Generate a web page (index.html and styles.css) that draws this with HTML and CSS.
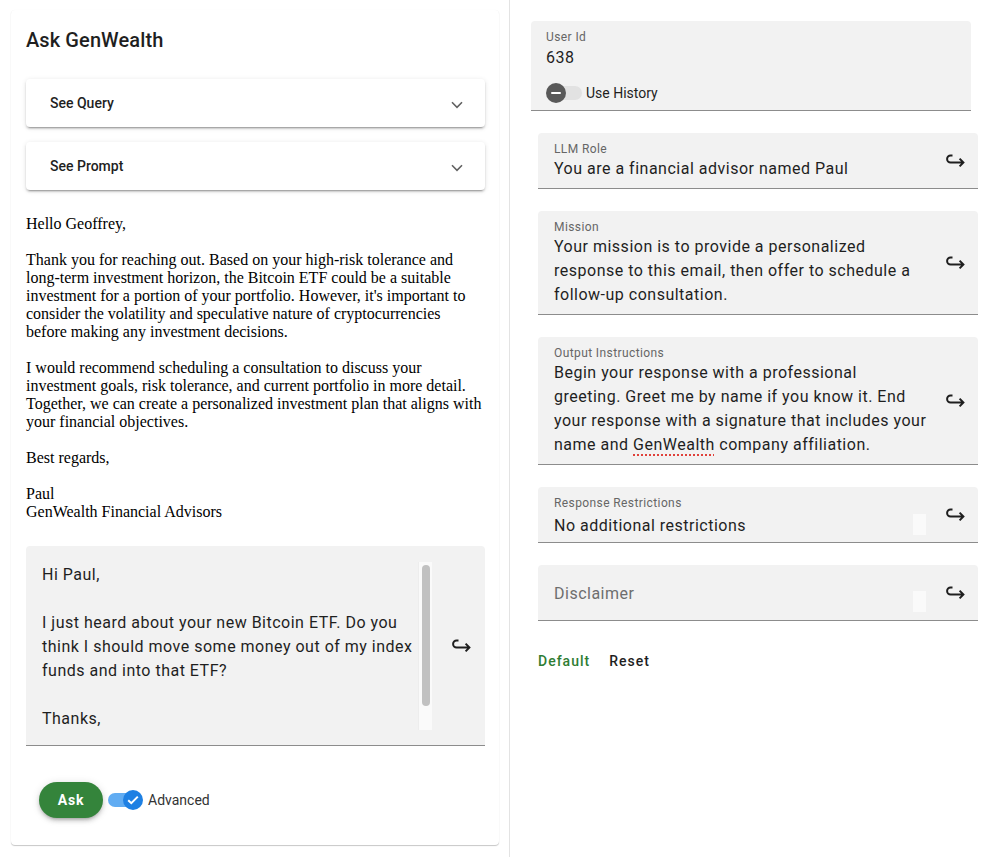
FILE: index.html
```html
<!DOCTYPE html>
<html lang="en">
<head>
<meta charset="utf-8">
<title>Ask GenWealth</title>
<link rel="stylesheet" href="styles.css">
</head>
<body>
<div class="layout">
  <section class="left-col">
    <div class="card">
      <h1 class="card-title">Ask GenWealth</h1>
      <div class="panel">
        <span class="panel-title">See Query</span>
        <svg class="chev" width="12" height="8" viewBox="0 0 12 8"><path d="M1 1.3L6 6.3L11 1.3" fill="none" stroke="#616161" stroke-width="1.6"/></svg>
      </div>
      <div class="panel panel-second">
        <span class="panel-title">See Prompt</span>
        <svg class="chev" width="12" height="8" viewBox="0 0 12 8"><path d="M1 1.3L6 6.3L11 1.3" fill="none" stroke="#616161" stroke-width="1.6"/></svg>
      </div>
      <div class="response">Hello Geoffrey,

Thank you for reaching out. Based on your high-risk tolerance and long-term investment horizon, the Bitcoin ETF could be a suitable investment for a portion of your portfolio. However, it's important to consider the volatility and speculative nature of cryptocurrencies before making any investment decisions.

I would recommend scheduling a consultation to discuss your investment goals, risk tolerance, and current portfolio in more detail. Together, we can create a personalized investment plan that aligns with your financial objectives.

Best regards,

Paul
GenWealth Financial Advisors</div>
      <div class="query-field">
        <div class="query-scroll">
          <div class="query-text">Hi Paul,

I just heard about your new Bitcoin ETF. Do you think I should move some money out of my index funds and into that ETF?

Thanks,</div>
          <div class="scrollbar"><div class="thumb"></div></div>
        </div>
        <button class="send" aria-label="Send">
          <svg width="20" height="18" viewBox="0 0 20 18"><path d="M7.5 3.5H5.6a3.5 3.5 0 0 0 0 7H18.2M14.6 6.6L18.4 10.5L14.6 14.4" fill="none" stroke="#1f1f1f" stroke-width="2"/></svg>
        </button>
      </div>
      <div class="actions">
        <button class="ask">Ask</button>
        <label class="toggle toggle-adv">
          <span class="track track-on"><span class="knob knob-on"><svg width="12" height="10" viewBox="0 0 12 10"><path d="M1.2 5.2L4.3 8.2L10.8 1.6" fill="none" stroke="#fff" stroke-width="2"/></svg></span></span>
          <span class="toggle-text">Advanced</span>
        </label>
      </div>
    </div>
  </section>

  <section class="right-col">
    <div class="user-field">
      <div class="label">User Id</div>
      <div class="value">638</div>
      <label class="toggle toggle-hist">
        <span class="track track-off"><span class="knob knob-off"><span class="minus"></span></span></span>
        <span class="toggle-text">Use History</span>
      </label>
    </div>

    <div class="prompts">
      <div class="pfield">
        <div class="pbody">
          <div class="label">LLM Role</div>
          <div class="value">You are a financial advisor named Paul</div>
        </div>
        <button class="send" aria-label="Apply"><svg width="20" height="18" viewBox="0 0 20 18"><path d="M7.5 3.5H5.6a3.5 3.5 0 0 0 0 7H18.2M14.6 6.6L18.4 10.5L14.6 14.4" fill="none" stroke="#1f1f1f" stroke-width="2"/></svg></button>
      </div>
      <div class="pfield">
        <div class="pbody">
          <div class="label">Mission</div>
          <div class="value">Your mission is to provide a personalized response to this email, then offer to schedule a follow-up consultation.</div>
        </div>
        <button class="send" aria-label="Apply"><svg width="20" height="18" viewBox="0 0 20 18"><path d="M7.5 3.5H5.6a3.5 3.5 0 0 0 0 7H18.2M14.6 6.6L18.4 10.5L14.6 14.4" fill="none" stroke="#1f1f1f" stroke-width="2"/></svg></button>
      </div>
      <div class="pfield">
        <div class="pbody">
          <div class="label">Output Instructions</div>
          <div class="value">Begin your response with a professional greeting. Greet me by name if you know it. End your response with a signature that includes your name and <span class="spell">GenWealth</span> company affiliation.</div>
        </div>
        <button class="send" aria-label="Apply"><svg width="20" height="18" viewBox="0 0 20 18"><path d="M7.5 3.5H5.6a3.5 3.5 0 0 0 0 7H18.2M14.6 6.6L18.4 10.5L14.6 14.4" fill="none" stroke="#1f1f1f" stroke-width="2"/></svg></button>
      </div>
      <div class="pfield">
        <div class="pbody pbody-rr">
          <div class="label">Response Restrictions</div>
          <div class="value value-row value-rr"><span>No additional restrictions</span><span class="strip"></span></div>
        </div>
        <button class="send" aria-label="Apply"><svg width="20" height="18" viewBox="0 0 20 18"><path d="M7.5 3.5H5.6a3.5 3.5 0 0 0 0 7H18.2M14.6 6.6L18.4 10.5L14.6 14.4" fill="none" stroke="#1f1f1f" stroke-width="2"/></svg></button>
      </div>
      <div class="pfield">
        <div class="pbody pbody-empty">
          <div class="value value-row"><span class="placeholder">Disclaimer</span><span class="strip strip-low"></span></div>
        </div>
        <button class="send" aria-label="Apply"><svg width="20" height="18" viewBox="0 0 20 18"><path d="M7.5 3.5H5.6a3.5 3.5 0 0 0 0 7H18.2M14.6 6.6L18.4 10.5L14.6 14.4" fill="none" stroke="#1f1f1f" stroke-width="2"/></svg></button>
      </div>
    </div>

    <div class="prompt-actions">
      <button class="text-btn text-btn-green">Default</button>
      <button class="text-btn">Reset</button>
    </div>
  </section>
</div>
</body>
</html>
```
FILE: styles.css
```css
* { box-sizing: border-box; }
html, body { margin: 0; padding: 0; background: #fff; }
body {
  font-family: Roboto, "Noto Sans", "Liberation Sans", sans-serif;
  color: #1f1f1f;
  width: 992px;
  height: 857px;
  overflow: hidden;
}
button { font-family: inherit; }
.layout { display: flex; height: 857px; }

/* left column */
.left-col {
  width: 510px;
  flex: none;
  border-right: 1px solid #e3e3e3;
  padding: 10px 10px 0 11px;
}
.card {
  background: #fff;
  border-radius: 4px;
  box-shadow: 0 1px 1px 0 rgba(0,0,0,.22), 0 0 1px 0 rgba(0,0,0,.05);
  padding: 18px 14px 27px 15px;
}
.card-title {
  margin: 0;
  font-size: 20px;
  line-height: 24px;
  font-weight: 500;
  letter-spacing: 0.1px;
  color: #1f1f1f;
}
.panel {
  margin-top: 27px;
  height: 48px;
  border-radius: 4px;
  background: #fff;
  box-shadow: 0 3px 1px -2px rgba(0,0,0,.2), 0 2px 2px 0 rgba(0,0,0,.14), 0 1px 5px 0 rgba(0,0,0,.12);
  display: flex;
  align-items: center;
  justify-content: space-between;
  padding: 0 22px 0 24px;
}
.panel-second { margin-top: 15px; }
.panel-title { font-size: 14px; font-weight: 500; color: #1f1f1f; }
.chev { margin-top: 4px; }

.response {
  margin-top: 25px;
  font-family: "Liberation Serif", "Times New Roman", serif;
  font-size: 16px;
  line-height: 18px;
  color: #000;
  white-space: pre-line;
}

.query-field {
  margin-top: 25px;
  background: #f2f2f2;
  border-radius: 4px 4px 0 0;
  border-bottom: 1px solid #8c8c8c;
  padding: 16px 4px 15px 16px;
  display: flex;
  align-items: center;
}
.query-scroll { display: flex; width: 390px; height: 168px; }
.query-text {
  width: 376px;
  height: 168px;
  font-size: 16px;
  line-height: 24px;
  letter-spacing: 0.5px;
  white-space: pre-line;
  color: #1f1f1f;
  padding-top: 1px;
}
.scrollbar {
  width: 14px;
  height: 168px;
  background: #fafafa;
  border-left: 1px solid #ededed;
  padding: 3px 3px 0 3px;
}
.thumb { width: 8px; height: 141px; border-radius: 4px; background: #c1c1c1; }

.send {
  width: 40px;
  height: 40px;
  margin-left: 9px;
  padding: 0;
  border: none;
  background: transparent;
  display: grid;
  place-items: center;
  flex: none;
}

.actions {
  margin-top: 36px;
  display: flex;
  align-items: center;
  padding-left: 13px;
}
.ask {
  width: 64px;
  height: 36px;
  border: none;
  border-radius: 18px;
  background: #34843b;
  color: #fff;
  font-size: 14px;
  font-weight: 700;
  letter-spacing: 0.8px;
  box-shadow: 0 3px 3px -2px rgba(0,0,0,.2), 0 3px 4px 0 rgba(0,0,0,.14), 0 1px 8px 0 rgba(0,0,0,.12);
}

.toggle { display: flex; align-items: center; font-size: 14px; }
.toggle-adv { margin-left: 5px; color: #333; }
.track { position: relative; width: 34px; height: 14px; border-radius: 7px; flex: none; }
.track-on { background: #61acf2; }
.track-off { background: #e2e2e2; }
.knob {
  position: absolute;
  top: -3px;
  width: 20px;
  height: 20px;
  border-radius: 50%;
  display: grid;
  place-items: center;
}
.knob-on { right: -1px; background: #1e80e3; }
.knob-off { left: -2px; background: #595959; }
.minus { width: 10px; height: 2px; background: #fff; border-radius: 1px; }
.toggle-adv .toggle-text { margin-left: 6px; }
.toggle-hist .toggle-text { margin-left: 4px; color: #1f1f1f; }

/* right column */
.right-col { flex: 1; padding: 21px 14px 0 21px; }
.label {
  font-size: 12px;
  line-height: 16px;
  color: #666;
  letter-spacing: 0.4px;
}
.value {
  font-size: 16px;
  line-height: 24px;
  letter-spacing: 0.5px;
  color: #1f1f1f;
}
.user-field {
  width: 440px;
  background: #f2f2f2;
  border-radius: 4px 4px 0 0;
  border-bottom: 1px solid #8c8c8c;
  padding: 8px 15px 5px 15px;
}
.user-field .value { margin-top: 1px; }
.toggle-hist { margin-top: 11px; height: 24px; padding-left: 2px; }

.prompts {
  margin: 22px 0 0 7px;
  display: flex;
  flex-direction: column;
  gap: 22px;
}
.pfield {
  width: 440px;
  display: flex;
  align-items: center;
  background: #f2f2f2;
  border-radius: 4px 4px 0 0;
  border-bottom: 1px solid #8c8c8c;
  padding: 0 3px 0 16px;
}
.pfield .send { margin-left: 8px; }
.pbody { width: 373px; padding: 8px 0 7px; }
.pbody-rr { padding: 8px 0 4px; }
.value-rr { margin-top: 3px; }
.pbody-empty { padding: 17px 0 14px; }
.value-row { display: flex; justify-content: space-between; align-items: flex-start; }
.strip { width: 13px; height: 21px; background: #fafafa; flex: none; margin-right: 1px; }
.strip-low { margin-top: 9px; margin-bottom: -6px; }
.placeholder { color: #6e6e6e; }
.spell {
  text-decoration: underline dotted #e0413a;
  text-decoration-thickness: 1.5px;
  text-underline-offset: 4px;
}

.prompt-actions {
  margin: 22px 0 0 7px;
  height: 36px;
  display: flex;
  align-items: center;
  gap: 19px;
}
.text-btn {
  border: none;
  background: transparent;
  padding: 0;
  font-size: 14px;
  font-weight: 500;
  letter-spacing: 1px;
  color: #1f1f1f;
}
.text-btn-green { color: #2f7d33; }
```
